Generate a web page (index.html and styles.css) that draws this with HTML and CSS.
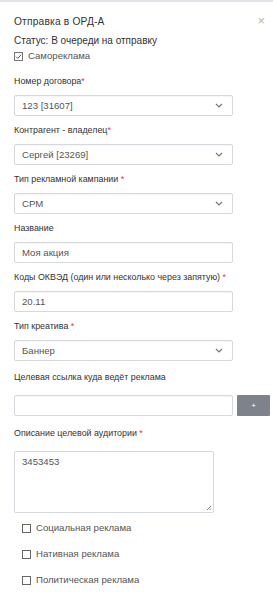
FILE: index.html
```html
<!DOCTYPE html>
<html lang="ru">
<head>
<meta charset="utf-8">
<link rel="stylesheet" href="styles.css">
</head>
<body>
<div class="topline"></div>
<div class="modal">
  <div class="head">
    <div class="title">Отправка в ОРД-А</div>
    <div class="close">×</div>
  </div>
  <div class="status">Статус: В очереди на отправку</div>
  <label class="check self">
    <span class="box checked"><svg width="9" height="9" viewBox="0 0 9 9"><path d="M2 4.6 L3.8 6.4 L7.2 2.6" fill="none" stroke="#555" stroke-width="1"/></svg></span>
    <span>Самореклама</span>
  </label>

  <div class="field first">
    <div class="lbl">Номер договора<span class="req">*</span></div>
    <div class="ctl select"><span>123 [31607]</span><svg class="chev" width="8" height="5" viewBox="0 0 8 5"><path d="M1 1 L4 4 L7 1" fill="none" stroke="#777" stroke-width="1.2"/></svg></div>
  </div>
  <div class="field">
    <div class="lbl">Контрагент - владелец<span class="req">*</span></div>
    <div class="ctl select"><span>Сергей [23269]</span><svg class="chev" width="8" height="5" viewBox="0 0 8 5"><path d="M1 1 L4 4 L7 1" fill="none" stroke="#777" stroke-width="1.2"/></svg></div>
  </div>
  <div class="field">
    <div class="lbl">Тип рекламной кампании <span class="req">*</span></div>
    <div class="ctl select"><span>CPM</span><svg class="chev" width="8" height="5" viewBox="0 0 8 5"><path d="M1 1 L4 4 L7 1" fill="none" stroke="#777" stroke-width="1.2"/></svg></div>
  </div>
  <div class="field">
    <div class="lbl">Название</div>
    <div class="ctl"><span>Моя акция</span></div>
  </div>
  <div class="field">
    <div class="lbl">Коды ОКВЭД (один или несколько через запятую) <span class="req">*</span></div>
    <div class="ctl"><span>20.11</span></div>
  </div>
  <div class="field">
    <div class="lbl">Тип креатива <span class="req">*</span></div>
    <div class="ctl select"><span>Баннер</span><svg class="chev" width="8" height="5" viewBox="0 0 8 5"><path d="M1 1 L4 4 L7 1" fill="none" stroke="#777" stroke-width="1.2"/></svg></div>
  </div>
  <div class="field link">
    <div class="lbl">Целевая ссылка куда ведёт реклама</div>
    <div class="row">
      <div class="ctl"></div>
      <div class="plus">+</div>
    </div>
  </div>
  <div class="field aud">
    <div class="lbl">Описание целевой аудитории <span class="req">*</span></div>
    <div class="area"><span>3453453</span>
      <svg class="grip" width="6" height="6" viewBox="0 0 6 6"><path d="M5 1 L1 5 M5 3.5 L3.5 5" stroke="#777" stroke-width="0.9"/></svg>
    </div>
  </div>
  <div class="opts">
    <label class="check"><span class="box"></span><span>Социальная реклама</span></label>
    <label class="check"><span class="box"></span><span>Нативная реклама</span></label>
    <label class="check"><span class="box"></span><span>Политическая реклама</span></label>
  </div>
</div>
</body>
</html>
```
FILE: styles.css
```css
* { box-sizing: border-box; }
html, body { margin: 0; padding: 0; background: #fff; }
body { font-family: "Liberation Sans", Arial, sans-serif; color: #333; width: 273px; height: 600px; overflow: hidden; }
.topline { height: 2px; background: #dfe2e6; }
.modal { padding: 12px 0 0 14px; }
.head { display: flex; justify-content: space-between; align-items: center; height: 14px; padding-right: 8px; }
.title { font-size: 10.2px; color: #333; font-weight: 500; letter-spacing: 0.2px; }
.close { font-size: 13px; color: #b9b9b9; line-height: 14px; }
.status { font-size: 10px; line-height: 14px; margin-top: 6px; color: #333; }
.check { display: flex; align-items: center; gap: 5px; font-size: 9.6px; color: #555; line-height: 14px; }
.self { margin-top: 1px; }
.box { width: 9px; height: 9px; border: 1px solid #777; display: inline-block; position: relative; background: #fff; flex: none; }
.box svg { position: absolute; left: -1px; top: -1px; }
.field { margin-top: 7px; }
.field.first { margin-top: 11px; }
.lbl { font-size: 8.9px; line-height: 14px; color: #333; margin-bottom: 7px; white-space: nowrap; }
.req { color: #e0383e; }
.ctl { width: 219px; height: 21px; border: 1px solid #d5d8dc; border-radius: 2px; display: flex; align-items: center; justify-content: space-between; padding: 0 9px 0 7px; font-size: 9.6px; color: #555; box-shadow: inset 0 1px 1px rgba(0,0,0,0.04); }
.chev { flex: none; }
.field.link { margin-top: 9px; }
.link .lbl { margin-bottom: 11px; }
.row { display: flex; gap: 4px; }
.plus { width: 33px; height: 21px; background: #7e838b; color: #fff; font-size: 8px; display: flex; align-items: center; justify-content: center; border-radius: 1px; }
.field.aud { margin-top: 10px; }
.aud .lbl { margin-bottom: 11px; }
.area { width: 200px; height: 62px; border: 1px solid #d5d8dc; border-radius: 2px; padding: 4px 7px; font-size: 9.6px; line-height: 12px; color: #555; position: relative; }
.grip { position: absolute; right: 1px; bottom: 1px; }
.opts { padding-left: 8px; margin-top: 8px; display: flex; flex-direction: column; gap: 12px; }
.opts .box { border-color: #666; }
```
